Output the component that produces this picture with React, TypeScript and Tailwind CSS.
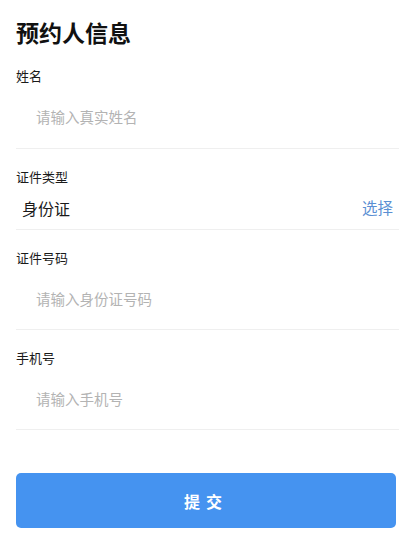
import { useState } from "react";

const font = { fontFamily: '"Noto Sans CJK SC", "Noto Sans", sans-serif' };

function TextField({
  label,
  placeholder,
  value,
  onChange,
  tall,
}: {
  label: string;
  placeholder: string;
  value: string;
  onChange: (v: string) => void;
  tall?: boolean;
}) {
  return (
    <div className="pt-[18px] border-b border-[#efefef]">
      <label className="block text-[13px] leading-[20px] text-[#1a1a1a]">{label}</label>
      <div className={tall ? "h-[62px] flex items-center pl-5" : "h-[61px] flex items-center pl-5"}>
        <input
          type="text"
          value={value}
          onChange={(e) => onChange(e.target.value)}
          placeholder={placeholder}
          className="w-full bg-transparent outline-none text-[14.5px] text-[#222] placeholder:text-[#b3b3b3]"
          style={font}
        />
      </div>
    </div>
  );
}

export default function App() {
  const [name, setName] = useState("");
  const [idNo, setIdNo] = useState("");
  const [phone, setPhone] = useState("");

  return (
    <div className="min-h-screen bg-white pl-4 pr-[13px]" style={font}>
      <h1 className="pt-[21px] text-[23px] leading-[23px] font-bold text-[#111]">预约人信息</h1>

      <div className="mt-[4px]">
        <TextField label="姓名" placeholder="请输入真实姓名" value={name} onChange={setName} tall />

        <div className="pt-[18px] border-b border-[#efefef]">
          <label className="block text-[13px] leading-[20px] text-[#1a1a1a]">证件类型</label>
          <div className="h-[42px] flex items-center justify-between pl-[6px] pr-[6px]">
            <span className="text-[16px] text-[#1a1a1a]">身份证</span>
            <button className="text-[15.5px] text-[#5b8fd3]">选择</button>
          </div>
        </div>

        <TextField label="证件号码" placeholder="请输入身份证号码" value={idNo} onChange={setIdNo} />
        <TextField label="手机号" placeholder="请输入手机号" value={phone} onChange={setPhone} />
      </div>

      <button className="mt-[43px] mr-[3px] w-[380px] h-[55px] rounded-[5px] bg-[#4593f0] text-white text-[16px] font-bold tracking-[6px] flex items-center justify-center">
        提交
      </button>
    </div>
  );
}
